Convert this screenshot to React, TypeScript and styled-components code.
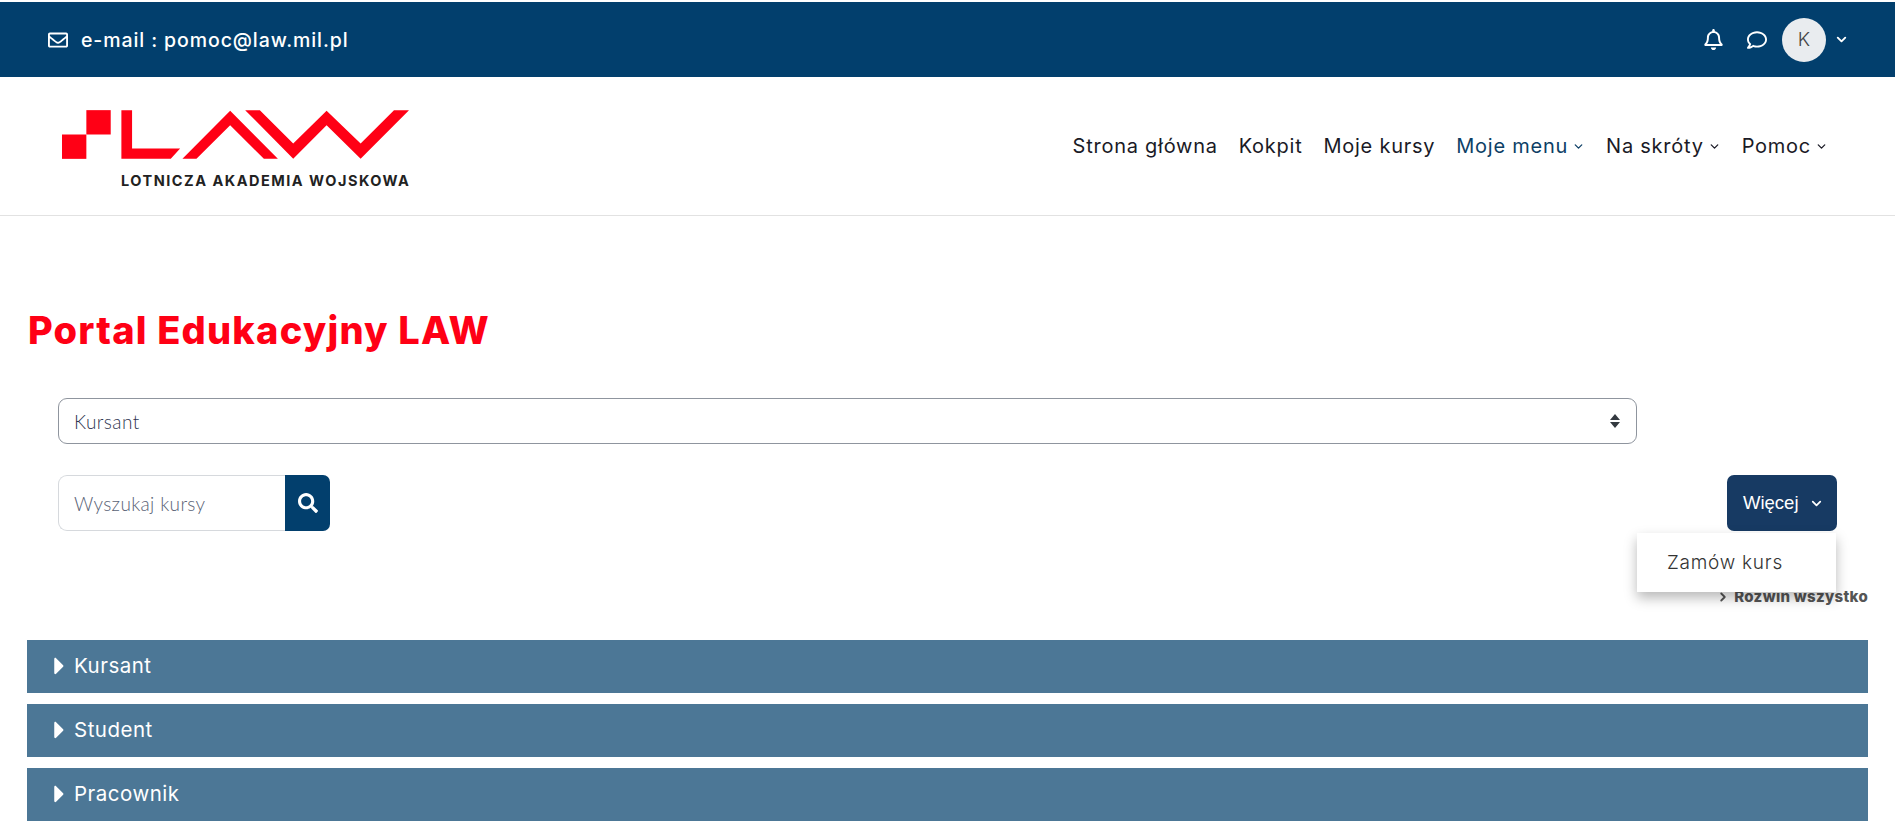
import React from "react";
import styled, { createGlobalStyle } from "styled-components";
import { ChevronDown, ChevronRight } from "lucide-react";
import { FaCaretRight, FaRegBell, FaRegComment, FaRegEnvelope, FaSearch } from "react-icons/fa";

const Global = createGlobalStyle`
  html, body { margin: 0; padding: 0; background: #fff; overflow: hidden; }
  body { font-family: "Inter", "Noto Sans", sans-serif; color: #1c1c28; }
  * { box-sizing: border-box; }
`;

const Page = styled.div`
  padding-top: 2px;
  height: 827px;
  overflow: hidden;
`;

const TopBar = styled.div`
  height: 75px;
  background: #023f6d;
  color: #fff;
  display: flex;
  align-items: center;
  justify-content: space-between;
  padding: 0 39px 0 48px;
`;

const Email = styled.div`
  display: flex;
  align-items: center;
  gap: 13px;
  font-size: 19.5px;
  line-height: 26px;
  padding-top: 1px;
  font-weight: 500;
  letter-spacing: 0.9px;
`;

const UserArea = styled.div`
  display: flex;
  align-items: center;
`;

const IconSlot = styled.span`
  width: 44px;
  display: flex;
  justify-content: center;
  align-items: center;
`;

const Avatar = styled.span`
  width: 44px;
  height: 44px;
  border-radius: 50%;
  background: #e9ecef;
  color: #444;
  font-size: 19px;
  font-weight: 300;
  display: flex;
  align-items: center;
  justify-content: center;
  margin-left: 3px;
`;

const UserCaret = styled.span`
  width: 30px;
  display: flex;
  justify-content: center;
`;

const Header = styled.header`
  height: 139px;
  display: flex;
  align-items: flex-start;
  justify-content: space-between;
  padding: 33px 67px 0 62px;
  border-bottom: 1px solid #e2e2e2;
`;

const Logo = styled.div`
  width: 347px;
  display: flex;
  flex-direction: column;
`;

const LogoMark = styled.svg`
  width: 347px;
  height: 49px;
  display: block;
`;

const LogoText = styled.div`
  margin: 14px 0 0 59px;
  font-size: 14.5px;
  line-height: 16px;
  font-weight: 700;
  letter-spacing: 1.5px;
  color: #222;
  white-space: nowrap;
`;

const Nav = styled.nav`
  display: flex;
  align-items: center;
  gap: 21px;
  padding-top: 10px;
  height: 62px;
`;

const NavItem = styled.a<{ $active?: boolean }>`
  display: flex;
  align-items: center;
  gap: 4px;
  font-size: 20px;
  letter-spacing: 0.75px;
  color: ${(p) => (p.$active ? "#0d3f66" : "#1a1a26")};
  white-space: nowrap;
`;

const Main = styled.main`
  padding: 0 27px;
`;

const Title = styled.h1`
  margin: 90px 0 0 1px;
  font-size: 38px;
  line-height: 48px;
  font-weight: 800;
  letter-spacing: 1.2px;
  color: #ff0015;
`;

const Controls = styled.div`
  padding: 44px 31px 0 31px;
`;

const SelectBox = styled.div`
  width: 1579px;
  height: 46px;
  display: flex;
  align-items: center;
  justify-content: space-between;
  padding: 0 16px 0 15px;
  border: 1px solid #8f959e;
  border-radius: 9px;
  font-family: "Lato", sans-serif;
  font-size: 19px;
  font-weight: 300;
  letter-spacing: 0.4px;
  color: #2f3550;
`;

const SortArrows = styled.svg`
  width: 10px;
  height: 14px;
  display: block;
`;

const ToolRow = styled.div`
  margin-top: 31px;
  display: flex;
  justify-content: space-between;
  align-items: flex-start;
`;

const SearchGroup = styled.div`
  display: flex;
  height: 56px;
  width: 272px;
`;

const SearchInput = styled.div`
  width: 227px;
  border: 1px solid #d6d9dd;
  border-right: 0;
  border-radius: 9px 0 0 9px;
  display: flex;
  align-items: center;
  padding-left: 15px;
  font-family: "Lato", sans-serif;
  font-size: 19px;
  font-weight: 300;
  letter-spacing: 0.35px;
  color: #596275;
`;

const SearchButton = styled.div`
  width: 45px;
  background: #023f6d;
  color: #fff;
  border-radius: 0 7px 7px 0;
  display: flex;
  align-items: center;
  justify-content: center;
`;

const MoreWrap = styled.div`
  position: relative;
`;

const MoreButton = styled.div`
  width: 110px;
  height: 56px;
  background: #173a63;
  color: #fff;
  border-radius: 7px;
  display: flex;
  align-items: center;
  gap: 10px;
  padding-left: 16px;
  font-family: "Liberation Sans", sans-serif;
  font-size: 18.5px;
`;

const Menu = styled.div`
  position: absolute;
  top: 58px;
  right: 1px;
  z-index: 2;
  width: 199px;
  height: 59px;
  background: #fff;
  display: flex;
  align-items: center;
  padding-left: 30px;
  font-size: 19px;
  font-weight: 300;
  letter-spacing: 0.75px;
  color: #333;
  box-shadow: 0 6px 12px rgba(0, 0, 0, 0.28);
`;

const ExpandRow = styled.div`
  margin-top: 57px;
  height: 18px;
  display: flex;
  justify-content: flex-end;
  align-items: center;
  gap: 4px;
  font-size: 15px;
  line-height: 18px;
  font-weight: 800;
  letter-spacing: 0.3px;
  color: #555;
`;

const Sections = styled.div`
  margin-top: 34px;
  display: flex;
  flex-direction: column;
  gap: 11px;
`;

const Section = styled.div`
  height: 53px;
  background: #4c7796;
  color: #fff;
  display: flex;
  align-items: center;
  padding: 0 0 2px 27px;
  gap: 9px;
  font-size: 20.5px;
  letter-spacing: 0.5px;
`;

const Caret = styled(FaCaretRight)`
  width: 11px;
  height: 28px;
  flex: none;
`;

export default function App() {
  return (
    <>
      <Global />
      <Page>
        <TopBar>
          <Email>
            <FaRegEnvelope size={20} />
            <span>e-mail : pomoc@law.mil.pl</span>
          </Email>
          <UserArea>
            <IconSlot>
              <FaRegBell size={21} />
            </IconSlot>
            <IconSlot>
              <FaRegComment size={20} />
            </IconSlot>
            <Avatar>K</Avatar>
            <UserCaret>
              <ChevronDown size={15} strokeWidth={3} />
            </UserCaret>
          </UserArea>
        </TopBar>
        <Header>
          <Logo>
            <LogoMark viewBox="67 60 1040 146" aria-hidden="true">
              <g fill="#ff0015">
                <rect x="140" y="60" width="73" height="73" />
                <rect x="67" y="133" width="73" height="73" />
                <polygon points="245,60 277,60 277,175 421,175 393,206 245,206" />
                <polygon points="428,206 571,62 714,206 672,206 571,105 470,206" />
                <polygon points="616,60 660,60 760,160 860,62 962,160 1062,60 1107,60 962,206 860,105 760,206" />
              </g>
            </LogoMark>
            <LogoText>LOTNICZA AKADEMIA WOJSKOWA</LogoText>
          </Logo>
          <Nav>
            <NavItem>Strona główna</NavItem>
            <NavItem>Kokpit</NavItem>
            <NavItem>Moje kursy</NavItem>
            <NavItem $active>Moje menu<ChevronDown size={13} strokeWidth={2.4} /></NavItem>
            <NavItem>Na skróty<ChevronDown size={13} strokeWidth={2.4} /></NavItem>
            <NavItem>Pomoc<ChevronDown size={13} strokeWidth={2.4} /></NavItem>
          </Nav>
        </Header>
        <Main>
          <Title>Portal Edukacyjny LAW</Title>
          <Controls>
            <SelectBox>
              <span>Kursant</span>
              <SortArrows viewBox="0 0 10 14" aria-hidden="true">
                <path d="M5 0 10 6H0zM5 14 0 8h10z" fill="#343a40" />
              </SortArrows>
            </SelectBox>
            <ToolRow>
              <SearchGroup>
                <SearchInput>Wyszukaj kursy</SearchInput>
                <SearchButton>
                  <FaSearch size={20} />
                </SearchButton>
              </SearchGroup>
              <MoreWrap>
                <MoreButton>
                  Więcej
                  <ChevronDown size={15} strokeWidth={2.8} />
                </MoreButton>
                <Menu>Zamów kurs</Menu>
              </MoreWrap>
            </ToolRow>
          </Controls>
          <ExpandRow>
            <ChevronRight size={14} strokeWidth={3.2} />
            <span>Rozwiń wszystko</span>
          </ExpandRow>
          <Sections>
            <Section><Caret />Kursant</Section>
            <Section><Caret />Student</Section>
            <Section><Caret />Pracownik</Section>
          </Sections>
        </Main>
      </Page>
    </>
  );
}
